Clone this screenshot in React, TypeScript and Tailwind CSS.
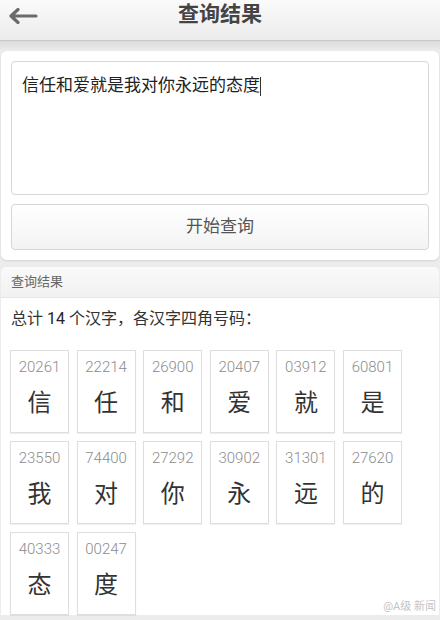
import React from 'react';

const chars = [
  { code: '20261', ch: '信' },
  { code: '22214', ch: '任' },
  { code: '26900', ch: '和' },
  { code: '20407', ch: '爱' },
  { code: '03912', ch: '就' },
  { code: '60801', ch: '是' },
  { code: '23550', ch: '我' },
  { code: '74400', ch: '对' },
  { code: '27292', ch: '你' },
  { code: '30902', ch: '永' },
  { code: '31301', ch: '远' },
  { code: '27620', ch: '的' },
  { code: '40333', ch: '态' },
  { code: '00247', ch: '度' },
];

const font = { fontFamily: "Roboto, 'Noto Sans CJK SC', sans-serif" };

export default function App() {
  return (
    <div className="w-[440px] h-[620px] overflow-hidden bg-[#ececec] relative" style={font}>
      {/* header */}
      <header className="h-[41px] flex items-center relative bg-gradient-to-b from-[#fbfbfb] to-[#ebebeb] border-b border-[#c8c8c8]">
        <svg className="absolute left-[8px] top-[8px]" width="30" height="16" viewBox="0 0 30 16" fill="none">
          <path d="M28 8H3M10 1.5L3 8l7 6.5" stroke="#6a6a6a" strokeWidth="3.2" strokeLinecap="round" strokeLinejoin="round" />
        </svg>
        <h1 className="w-full text-center text-[21px] font-bold text-[#444] -mt-[10px]">查询结果</h1>
      </header>
      <div className="h-[10px] bg-gradient-to-b from-[#dcdcdc] to-[#ececec]" />

      {/* input card */}
      <section className="mx-[1px] bg-white rounded-[6px] px-[10px] pt-[10px] pb-[10px] flex flex-col gap-[9px] shadow-[0_1px_2px_rgba(0,0,0,0.1)]">
        <div className="h-[134px] border border-[#d6d6d6] rounded-[4px] px-[10px] pt-[12px] text-[17px] text-[#222] leading-[22px]">
          信任和爱就是我对你永远的态度<span className="inline-block w-[1px] h-[19px] bg-[#333] align-middle" />
        </div>
        <button className="h-[46px] border border-[#d6d6d6] rounded-[4px] bg-gradient-to-b from-white to-[#f3f3f3] text-[17px] text-[#555]">
          开始查询
        </button>
      </section>

      {/* results */}
      <section className="mt-[7px] mx-[1px] bg-white rounded-t-[6px]">
        <div className="h-[31px] flex items-center px-[10px] text-[13px] text-[#666] bg-gradient-to-b from-[#fafafa] to-[#f1f1f1] border-b border-[#e6e6e6] rounded-t-[6px]">
          查询结果
        </div>
        <p className="px-[10px] pt-[9px] text-[16px] text-[#333] leading-[24px]">
          总计 <span className="text-[#222]">14</span> 个汉字，各汉字四角号码：
        </p>
        <div className="grid grid-cols-[repeat(6,59px)] gap-x-[7.6px] gap-y-[8px] px-[9px] pt-[19px]">
          {chars.map((c) => (
            <div
              key={c.code}
              className="h-[83px] border border-[#dedede] bg-white flex flex-col items-center shadow-[0_1px_1px_rgba(0,0,0,0.06)]"
            >
              <span className="mt-[6px] text-[15px] leading-[20px] font-light text-[#8c8c8c]">{c.code}</span>
              <span className="mt-[12px] text-[24px] leading-[28px] text-[#333]">{c.ch}</span>
            </div>
          ))}
        </div>
      </section>

      <div className="absolute right-[4px] bottom-[5px] text-[11px] text-[#c4c4c4]">@A级 新闻</div>
    </div>
  );
}
